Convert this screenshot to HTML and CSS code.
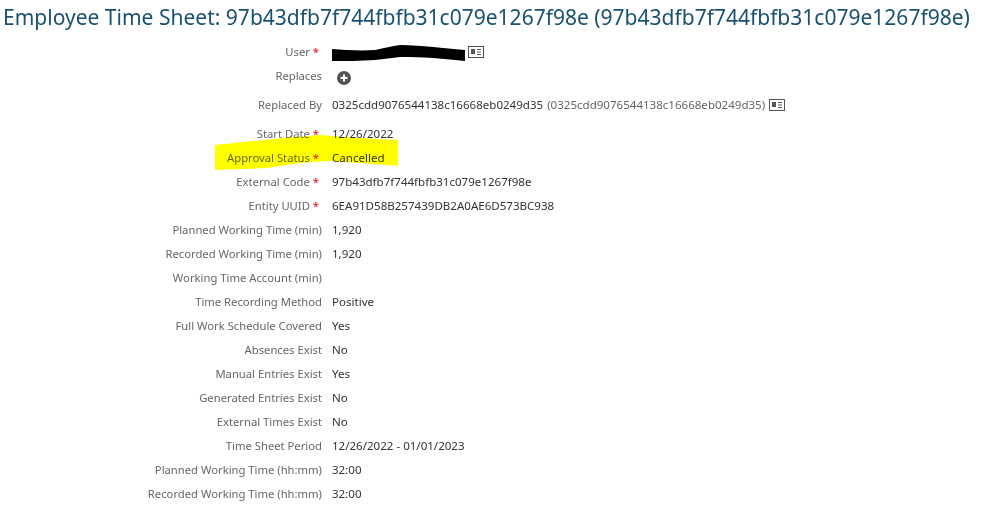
FILE: index.html
```html
<!DOCTYPE html>
<html lang="en">
<head>
<meta charset="utf-8">
<title>Employee Time Sheet</title>
<link rel="stylesheet" href="styles.css">
</head>
<body>
<h1 class="title">Employee Time Sheet: 97b43dfb7f744fbfb31c079e1267f98e (97b43dfb7f744fbfb31c079e1267f98e)</h1>
<div class="form">
  <div class="row"><span class="label req">User <i>*</i></span><span class="value"><span class="blank"></span><svg class="card" viewBox="0 0 16 12"><rect x=".5" y=".5" width="15" height="11" fill="#fff" stroke="#555"/><rect x="3" y="3" width="4" height="5" fill="#555"/><path d="M9 3.500h4M9 6h4M9 8.500h4" stroke="#555"/></svg></span></div>
  <div class="row"><span class="label">Replaces</span><span class="value"><svg class="plus" viewBox="0 0 14 14"><circle cx="7" cy="7" r="7" fill="#555"/><path d="M7 3.500v7M3.500 7h7" stroke="#fff" stroke-width="2"/></svg></span></div>
  <div class="row tall"><span class="label">Replaced By</span><span class="value"><span>0325cdd9076544138c16668eb0249d35</span><span class="muted">(0325cdd9076544138c16668eb0249d35)</span><svg class="card" viewBox="0 0 16 12"><rect x=".5" y=".5" width="15" height="11" fill="#fff" stroke="#555"/><rect x="3" y="3" width="4" height="5" fill="#555"/><path d="M9 3.500h4M9 6h4M9 8.500h4" stroke="#555"/></svg></span></div>
  <div class="row"><span class="label req">Start Date <i>*</i></span><span class="value">12/26/2022</span></div>
  <div class="row"><span class="label req">Approval Status <i>*</i></span><span class="value">Cancelled</span></div>
  <div class="row"><span class="label req">External Code <i>*</i></span><span class="value">97b43dfb7f744fbfb31c079e1267f98e</span></div>
  <div class="row"><span class="label req">Entity UUID <i>*</i></span><span class="value">6EA91D58B257439DB2A0AE6D573BC938</span></div>
  <div class="row"><span class="label">Planned Working Time (min)</span><span class="value">1,920</span></div>
  <div class="row"><span class="label">Recorded Working Time (min)</span><span class="value">1,920</span></div>
  <div class="row"><span class="label">Working Time Account (min)</span><span class="value"></span></div>
  <div class="row"><span class="label">Time Recording Method</span><span class="value">Positive</span></div>
  <div class="row"><span class="label">Full Work Schedule Covered</span><span class="value">Yes</span></div>
  <div class="row"><span class="label">Absences Exist</span><span class="value">No</span></div>
  <div class="row"><span class="label">Manual Entries Exist</span><span class="value">Yes</span></div>
  <div class="row"><span class="label">Generated Entries Exist</span><span class="value">No</span></div>
  <div class="row"><span class="label">External Times Exist</span><span class="value">No</span></div>
  <div class="row"><span class="label">Time Sheet Period</span><span class="value">12/26/2022 - 01/01/2023</span></div>
  <div class="row"><span class="label">Planned Working Time (hh:mm)</span><span class="value">32:00</span></div>
  <div class="row"><span class="label">Recorded Working Time (hh:mm)</span><span class="value">32:00</span></div>
</div>
<svg class="marks" viewBox="0 0 985 505">
  <path class="scribble" d="M332 49C345 50 360 51 375 50C385 48 392 46 400 45C412 45 422 46 433 47C443 48 453 49 465 50L465 61C455 60 445 59 433 58C422 57 411 57 400 57C392 58 384 59 375 60C360 61 345 61 332 61Z"/>
  <path class="marker" d="M215 145L243 142L283 138L320 135L357 138L398 140L398 166L360 163L327 161L300 163L267 168L215 170Z"/>
</svg>
</body>
</html>
```
FILE: styles.css
```css
html, body {
  margin: 0;
  padding: 0;
  background: #fff;
}
body {
  position: relative;
  width: 985px;
  height: 505px;
  overflow: hidden;
  font-family: "Noto Sans", "Open Sans", sans-serif;
}
.title {
  margin: 0;
  padding: 4px 0 0 3px;
  height: 35px;
  box-sizing: border-box;
  font-size: 21.03px;
  line-height: 26px;
  font-weight: 400;
  color: #1a5170;
  white-space: nowrap;
}
.form {
  display: flex;
  flex-direction: column;
  padding-top: 4px;
}
.row {
  display: flex;
  align-items: center;
  gap: 10px;
  height: 24px;
}
.row.tall {
  height: 34px;
}
.label {
  box-sizing: border-box;
  width: 322px;
  text-align: right;
  font-size: 11.25px;
  color: #666;
  white-space: nowrap;
}
.label.req {
  padding-right: 3px;
}
.label i {
  font-style: normal;
  color: #e00;
}
.value {
  display: flex;
  align-items: center;
  gap: 4px;
  font-size: 11.55px;
  color: #333;
  white-space: pre;
}
.muted {
  color: #666;
}
.blank {
  display: block;
  width: 132px;
  height: 10px;
}
.card {
  width: 16px;
  height: 12px;
  margin-top: 2px;
}
.plus {
  width: 14px;
  height: 14px;
  margin: 6px 0 0 5px;
}
.marks {
  position: absolute;
  left: 0;
  top: 0;
  width: 985px;
  height: 505px;
  pointer-events: none;
}
.scribble {
  fill: #000;
}
.marker {
  fill: #ffff00;
  mix-blend-mode: multiply;
}
```
